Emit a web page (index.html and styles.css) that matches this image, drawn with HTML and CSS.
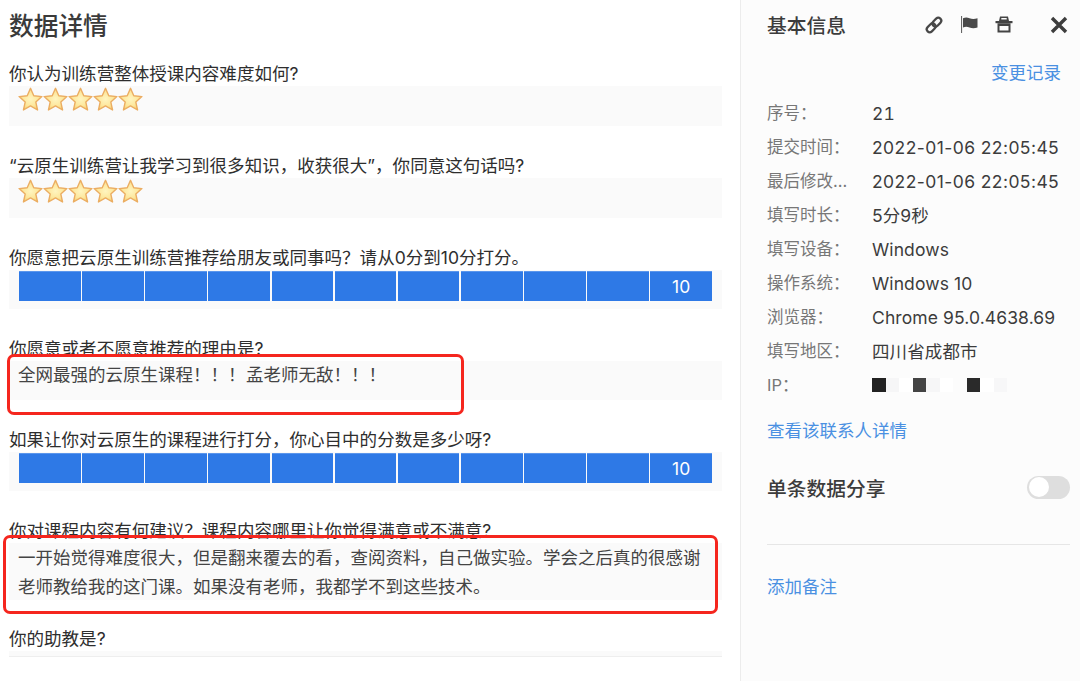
FILE: index.html
```html
<!DOCTYPE html>
<html lang="zh-CN">
<head>
<meta charset="utf-8">
<title>数据详情</title>
<link rel="stylesheet" href="styles.css">
</head>
<body>
<svg class="defs" width="0" height="0" aria-hidden="true">
  <defs>
    <radialGradient id="starfill" cx="0.5" cy="0.5" r="0.55">
      <stop offset="0" stop-color="#fff5c0"/>
      <stop offset="0.6" stop-color="#fde79c"/>
      <stop offset="1" stop-color="#f7cb68"/>
    </radialGradient>
    <symbol id="star" viewBox="0 0 25 25">
      <path d="M12.5 1.300L15.790 8.770 23.910 9.590 17.830 15.030 19.550 23.010 12.500 18.900 5.450 23.010 7.170 15.030 1.090 9.590 9.210 8.770z" fill="url(#starfill)" stroke="#ebad62" stroke-width="1.400" stroke-linejoin="round"/>
    </symbol>
  </defs>
</svg>
<div class="page">
  <main class="main">
    <h1 class="title">数据详情</h1>
    <section class="q">
      <h2 class="q-label">你认为训练营整体授课内容难度如何?</h2>
      <div class="answer stars">
        <svg class="star"><use href="#star"/></svg><svg class="star"><use href="#star"/></svg><svg class="star"><use href="#star"/></svg><svg class="star"><use href="#star"/></svg><svg class="star"><use href="#star"/></svg>
      </div>
    </section>
    <section class="q">
      <h2 class="q-label">“云原生训练营让我学习到很多知识，收获很大”，你同意这句话吗?</h2>
      <div class="answer stars">
        <svg class="star"><use href="#star"/></svg><svg class="star"><use href="#star"/></svg><svg class="star"><use href="#star"/></svg><svg class="star"><use href="#star"/></svg><svg class="star"><use href="#star"/></svg>
      </div>
    </section>
    <section class="q">
      <h2 class="q-label">你愿意把云原生训练营推荐给朋友或同事吗？请从0分到10分打分。</h2>
      <div class="answer scale">
        <div class="cell"></div><div class="cell"></div><div class="cell"></div><div class="cell"></div><div class="cell"></div><div class="cell"></div><div class="cell"></div><div class="cell"></div><div class="cell"></div><div class="cell"></div><div class="cell">10</div>
      </div>
    </section>
    <section class="q">
      <h2 class="q-label">你愿意或者不愿意推荐的理由是?</h2>
      <div class="answer text short">全网最强的云原生课程！！！ 孟老师无敌！！！</div>
    </section>
    <section class="q">
      <h2 class="q-label">如果让你对云原生的课程进行打分，你心目中的分数是多少呀?</h2>
      <div class="answer scale">
        <div class="cell"></div><div class="cell"></div><div class="cell"></div><div class="cell"></div><div class="cell"></div><div class="cell"></div><div class="cell"></div><div class="cell"></div><div class="cell"></div><div class="cell"></div><div class="cell">10</div>
      </div>
    </section>
    <section class="q">
      <h2 class="q-label">你对课程内容有何建议？课程内容哪里让你觉得满意或不满意?</h2>
      <div class="answer text long">一开始觉得难度很大，但是翻来覆去的看，查阅资料，自己做实验。学会之后真的很感谢老师教给我的这门课。如果没有老师，我都学不到这些技术。</div>
    </section>
    <section class="q">
      <h2 class="q-label">你的助教是?</h2>
      <div class="answer empty"></div>
    </section>
    <div class="mark mark-a"></div>
    <div class="mark mark-b"></div>
  </main>
  <aside class="side">
    <header class="side-head">
      <h2 class="side-title">基本信息</h2>
      <div class="tools">
        <svg class="tool" viewBox="0 0 18 18"><g transform="rotate(-45 9 9)" fill="none" stroke="#484848" stroke-width="2.200"><rect x="0" y="6" width="10" height="6" rx="3"/><rect x="8" y="6" width="10" height="6" rx="3"/></g></svg>
        <svg class="tool" viewBox="0 0 18 18"><path d="M1 0h1.100v17H1z" fill="#666"/><path d="M3 2.200c2.500-1 4.500-.8 6.500 0 2.500 1 5 1 8 0V11.500c-3 1-5.500 1-8 0-2-.8-4-1-6.500 0z" fill="#4a4a4a"/></svg>
        <svg class="tool" viewBox="0 0 18 18"><path d="M5 0.500h8l1 4.500H4zM6.300 2v1.500h5.400V2z" fill="#444" fill-rule="evenodd"/><path d="M0.500 5h17v2.200H.5z" fill="#444"/><path d="M2.500 7.200h13V16.500h-13zM4.500 10v4.500h9V10z" fill="#444" fill-rule="evenodd"/></svg>
        <svg class="tool close" viewBox="0 0 18 18"><path d="M2 2l14 14M16 2L2 16" fill="none" stroke="#3d3d3d" stroke-width="3.400"/></svg>
      </div>
    </header>
    <div class="log"><a class="link">变更记录</a></div>
    <dl class="info">
      <div class="row"><dt>序号：</dt><dd class="num">21</dd></div>
      <div class="row"><dt>提交时间：</dt><dd class="date">2022-01-06 22:05:45</dd></div>
      <div class="row"><dt>最后修改...</dt><dd class="date">2022-01-06 22:05:45</dd></div>
      <div class="row"><dt>填写时长：</dt><dd>5分9秒</dd></div>
      <div class="row"><dt>填写设备：</dt><dd>Windows</dd></div>
      <div class="row"><dt>操作系统：</dt><dd>Windows 10</dd></div>
      <div class="row"><dt>浏览器：</dt><dd>Chrome 95.0.4638.69</dd></div>
      <div class="row"><dt>填写地区：</dt><dd>四川省成都市</dd></div>
      <div class="row"><dt>IP：</dt><dd class="ip"><i class="px k1"></i><i class="px l1"></i><i class="px w"></i><i class="px k2"></i><i class="px l1"></i><i class="px w"></i><i class="px w2"></i><i class="px k3"></i><i class="px w"></i><i class="px l2"></i></dd></div>
    </dl>
    <a class="link contact">查看该联系人详情</a>
    <div class="share">
      <h3 class="share-title">单条数据分享</h3>
      <span class="toggle"><span class="knob"></span></span>
    </div>
    <hr class="rule">
    <a class="link note">添加备注</a>
  </aside>
</div>
</body>
</html>
```

FILE: styles.css
```css
* { box-sizing: border-box; }
html, body { margin: 0; padding: 0; }
body {
  width: 1080px;
  height: 681px;
  overflow: hidden;
  background: #fff;
  color: #333;
  font-family: "Inter", "Noto Sans CJK SC", sans-serif;
  font-size: 17.5px;
}
.defs { position: absolute; }
.page { display: flex; height: 681px; overflow: hidden; }

.main {
  position: relative;
  width: 740px;
  flex: none;
  padding: 0 18px 0 9px;
}
.title {
  margin: 0;
  height: 52px;
  font-size: 24.7px;
  font-weight: 500;
  line-height: 52px;
  color: #3a3a3a;
}
.q-label {
  margin: 0;
  padding-top: 10px;
  height: 34px;
  font-size: 17.55px;
  font-weight: 400;
  line-height: 24px;
  color: #2e2e2e;
  white-space: nowrap;
}
.answer {
  background: #fafafa;
  width: 713px;
  margin-bottom: 18px;
}
.stars { height: 40px; padding: 1px 0 0 9px; display: flex; }
.star { width: 25px; height: 25px; flex: none; }
.scale { height: 39px; padding: 1px 10px 0; display: flex; gap: 1.4px; }
.cell {
  flex: 1;
  height: 30px;
  background: #2e79e6;
  border-top: 1px solid #5b96ec;
  color: #fff;
  font-size: 17.5px;
  line-height: 29px;
  text-align: center;
}
.text { padding: 0 9px; line-height: 29px; color: #444; }
.short { height: 39px; word-spacing: -4.5px; line-height: 27px; }
.long { height: 57px; margin-bottom: 17px; }
.empty { height: 6px; border-bottom: 1px solid #eee; }

.mark {
  position: absolute;
  border: 3.5px solid #f5261e;
  border-radius: 7px;
}
.mark-a { left: 7px; top: 354px; width: 457px; height: 61px; }
.mark-b { left: 3px; top: 535px; width: 715px; height: 79px; }

.side {
  width: 340px;
  flex: none;
  background: #fcfcfc;
  border-left: 1px solid #ececec;
  padding: 0 10px 0 26px;
}
.side-head { display: flex; align-items: center; justify-content: space-between; height: 48px; }
.side-title { margin: 0; font-size: 19.75px; font-weight: 500; color: #3c3c3c; }
.tools { display: flex; align-items: center; margin-top: 2px; }
.tool { width: 18px; height: 18px; margin-left: 17px; overflow: visible; }
.close { margin-left: 37px; margin-right: 2px; }
.log { text-align: right; height: 40px; padding: 10px 9px 0 0; line-height: 30px; }
.link { color: #4a90e2; display: block; font-size: 17.5px; }
.info { margin: 0; padding-top: 9.4px; }
.row { display: flex; height: 33.9px; line-height: 33.9px; }
.row dt { width: 105px; color: #777; font-size: 16.5px; flex: none; }
.row dd { margin: 0; color: #3c3c3c; letter-spacing: .1px; }
.row .date { letter-spacing: .42px; }
.row .num { font-variant-numeric: tabular-nums; }
.ip { display: flex; align-items: center; }
.px { display: block; width: 13.5px; height: 14px; }
.k1 { background: #222; }
.k2 { background: #444; }
.k3 { background: #2a2a2a; }
.l1 { background: #f6f6f7; }
.l2 { background: #f7f7f8; }
.w { background: #fff; }
.w2 { background: #fcfcfc; }
.contact { margin-top: 16.6px; height: 24px; line-height: 24px; }
.share { display: flex; align-items: center; justify-content: space-between; margin-top: 32px; height: 24px; }
.share-title { margin: 0; font-size: 19.75px; font-weight: 500; color: #3c3c3c; }
.toggle { width: 43px; height: 23px; border-radius: 12px; background: #dedede; padding: 1.5px; display: block; }
.knob { display: block; width: 20px; height: 20px; border-radius: 50%; background: #fff; }
.rule { border: 0; border-top: 1px solid #e6e6e6; margin: 44.5px 0 0; }
.note { margin-top: 30px; height: 24px; line-height: 24px; }
```
